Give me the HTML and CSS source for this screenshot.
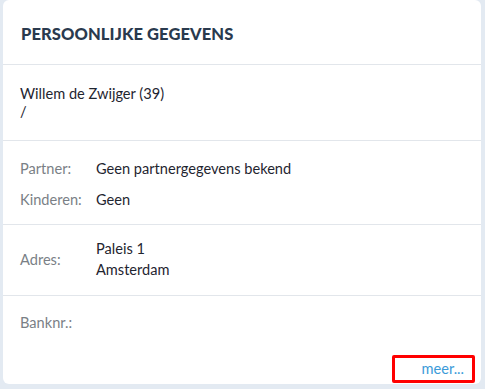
FILE: index.html
```html
<!DOCTYPE html>
<html lang="nl">
<head>
    <meta charset="UTF-8">
    <title>Persoonlijke gegevens</title>
    <link rel="stylesheet" href="styles.css">
</head>
<body>
    <div class="card">
        <div class="card-head">
            <h3>PERSOONLIJKE GEGEVENS</h3>
        </div>
        <div class="card-section intro">
            <div class="name">Willem de Zwijger (39)</div>
            <div class="name">/</div>
        </div>
        <div class="card-section rows">
            <div class="row"><span class="lbl">Partner:</span><span class="val">Geen partnergegevens bekend</span></div>
            <div class="row"><span class="lbl">Kinderen:</span><span class="val">Geen</span></div>
        </div>
        <div class="card-section addr">
            <div class="row row-addr"><span class="lbl">Adres:</span><span class="val">Paleis 1<br>Amsterdam</span></div>
        </div>
        <div class="card-section last">
            <div class="row"><span class="lbl">Banknr.:</span><span class="val"></span></div>
        </div>
        <div class="card-foot">
            <a href="#" class="more">meer...</a>
        </div>
    </div>
</body>
</html>
```

FILE: styles.css
```css
body{
    margin: 0;
    background: #e3eaf2;
    font-family: Lato, "Open Sans", sans-serif;
    font-size: 14.6px;
    color: #1f2530;
}
.card{
    margin: 0 4px 5px 3px;
    height: 384px;
    background: #fff;
    border-radius: 6px;
    box-sizing: border-box;
    display: flex;
    flex-direction: column;
}
.card > div{
    flex-shrink: 0;
}
.card-head{
    height: 65px;
    box-sizing: border-box;
    border-bottom: 1px solid #e2e6eb;
    padding: 0 18px;
    display: flex;
    align-items: center;
}
.card-head h3{
    margin: 3px 0 0;
    font-size: 16.5px;
    font-weight: 900;
    color: #2a3a4e;
    letter-spacing: 0.1px;
}
.card-section{
    padding: 0 17px;
    border-bottom: 1px solid #e2e6eb;
}
.intro{
    padding-top: 20px;
    padding-bottom: 19px;
    line-height: 18px;
}
.rows{
    padding-top: 12px;
    padding-bottom: 9px;
}
.row{
    display: flex;
    line-height: 19px;
    padding: 6px 0;
}
.addr{
    padding-top: 13px;
    padding-bottom: 15px;
}
.row-addr{
    align-items: center;
    line-height: 21px;
    padding: 0;
}
.lbl{
    width: 76px;
    color: #7a7f86;
}
.val{
    color: #1f2530;
}
.last{
    border-bottom: 0;
    padding-top: 11px;
}
.card-foot{
    margin-top: auto;
    display: flex;
    justify-content: flex-end;
    padding: 0 6px 1px 0;
}
.more{
    display: block;
    width: 69px;
    height: 22px;
    line-height: 22px;
    border: 3px solid #ff0000;
    border-radius: 2px;
    text-align: right;
    padding-right: 8px;
    color: #3b9bd9;
    text-decoration: none;
}
```
